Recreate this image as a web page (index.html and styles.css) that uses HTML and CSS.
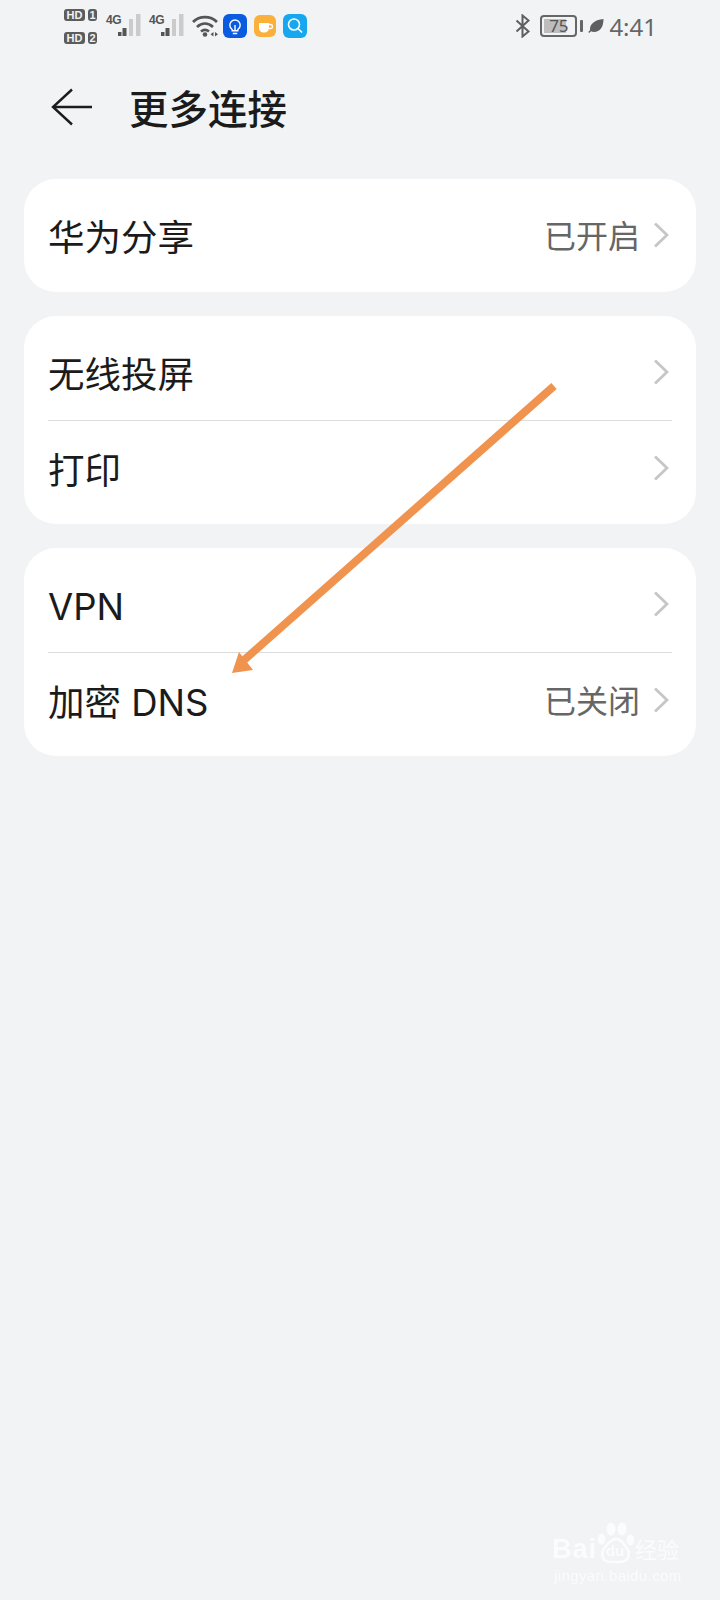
FILE: index.html
```html
<!DOCTYPE html>
<html lang="zh-CN">
<head>
    <meta charset="UTF-8">
    <meta name="viewport" content="width=device-width, initial-scale=1.0">
    <title>更多连接</title>
    <link rel="stylesheet" href="styles.css">
</head>
<body>
    <div class="status-bar">
        <div class="status-left">
            <div class="sims">
                <div class="sim"><span class="hd">HD</span><span class="num">1</span></div>
                <div class="sim"><span class="hd">HD</span><span class="num">2</span></div>
            </div>
            <div class="nets">
                <div class="net">
                    <span class="net-label">4G</span>
                    <svg width="24" height="22" viewBox="0 0 24 22">
                        <rect x="0" y="18" width="3.500" height="4" fill="#555"/>
                        <rect x="4.500" y="14" width="4" height="8" fill="#555"/>
                        <rect x="11" y="5" width="4" height="17" fill="#cbcbcb"/>
                        <rect x="18" y="0" width="4.500" height="22" fill="#cbcbcb"/>
                    </svg>
                </div>
                <div class="net">
                    <span class="net-label">4G</span>
                    <svg width="24" height="22" viewBox="0 0 24 22">
                        <rect x="0" y="18" width="3.500" height="4" fill="#555"/>
                        <rect x="4.500" y="14" width="4" height="8" fill="#555"/>
                        <rect x="11" y="5" width="4" height="17" fill="#cbcbcb"/>
                        <rect x="18" y="0" width="4.500" height="22" fill="#cbcbcb"/>
                    </svg>
                </div>
            </div>
            <svg class="wifi" width="28" height="24" viewBox="0 0 28 24" fill="none" stroke="#555" stroke-width="2.800">
                <path d="M1 8C7.500 1.500 18.500 1.500 25 8"/>
                <path d="M5 13C10 8.500 16 8.500 21 13"/>
                <path d="M9 17.500C11.500 15.500 14.500 15.500 17 17.500"/>
                <circle cx="13" cy="20.500" r="2.300" fill="#555" stroke="none"/>
                <path d="M21.500 18v4.500l-3-2.200zM23 18v4.500l3-2.200z" fill="#555" stroke="none"/>
            </svg>
            <div class="apps">
                <svg width="24" height="24" viewBox="0 0 24 24">
                    <rect width="24" height="24" rx="6" fill="#0b5be0"/>
                    <path d="M9.200 15.500C7.600 14.400 6.800 12.800 6.800 11.200a5.200 5.200 0 0 1 10.400 0c0 1.600-.8 3.200-2.400 4.300v1.300H9.200z" fill="none" stroke="#fff" stroke-width="1.400"/>
                    <path d="M9.800 19.500h4.400M12 11v5" stroke="#fff" stroke-width="1.400" fill="none"/>
                </svg>
                <svg width="24" height="24" viewBox="0 0 24 24">
                    <rect x="1" y="1" width="22" height="22" rx="6" fill="#fbb03b"/>
                    <path d="M6 9h10v5a4.500 4.500 0 0 1-4.500 4.500h-1A4.500 4.500 0 0 1 6 14z" fill="#fff"/>
                    <path d="M16 10.500h1.500a1.800 1.800 0 0 1 0 4H16" fill="none" stroke="#fff" stroke-width="1.300"/>
                </svg>
                <svg width="24" height="24" viewBox="0 0 24 24">
                    <rect width="24" height="24" rx="6" fill="#17a7ef"/>
                    <circle cx="11" cy="10.500" r="5.500" fill="none" stroke="#fff" stroke-width="1.600"/>
                    <path d="M15 14.500l4 4" stroke="#fff" stroke-width="1.600"/>
                </svg>
            </div>
        </div>
        <div class="status-right">
            <svg width="16" height="24" viewBox="0 0 16 24" fill="none" stroke="#5f5f5f" stroke-width="2">
                <path d="M1.500 6.500l12 11-6 5V1.500l6 5-12 11"/>
            </svg>
            <div class="battery-wrap">
                <div class="battery"><span class="battery-fill"></span><span class="battery-num">75</span></div>
                <span class="battery-tip"></span>
            </div>
            <svg class="leaf" width="16" height="16" viewBox="0 0 16 16">
                <path d="M15.500 1C15.500 9 12 14 6 14c-1.200 0-2.300-.3-3-.8L1.200 15 .3 14l1.800-1.900C1.300 7 6 1.800 15.500 1z" fill="#5f5f5f"/>
            </svg>
            <span class="clock">4:41</span>
        </div>
    </div>

    <div class="title-bar">
        <svg class="back" width="42" height="38" viewBox="0 0 42 38" fill="none" stroke="#1c1c1c" stroke-width="2.400">
            <path d="M22 1.500L3 19 22 36.500"/>
            <path d="M3 19H42"/>
        </svg>
        <h1 class="page-title">更多连接</h1>
    </div>

    <div class="card">
        <div class="row row-single">
            <span class="row-label">华为分享</span>
            <span class="row-value">已开启</span>
            <svg class="chevron" width="16" height="26" viewBox="0 0 16 26" fill="none" stroke="#c6c6c6" stroke-width="2.800"><path d="M2 1.500L14 13 2 24.500"/></svg>
        </div>
    </div>

    <div class="card">
        <div class="row row-first">
            <span class="row-label">无线投屏</span>
            <svg class="chevron" width="16" height="26" viewBox="0 0 16 26" fill="none" stroke="#c6c6c6" stroke-width="2.800"><path d="M2 1.500L14 13 2 24.500"/></svg>
        </div>
        <div class="row row-line">
            <span class="row-label">打印</span>
            <svg class="chevron" width="16" height="26" viewBox="0 0 16 26" fill="none" stroke="#c6c6c6" stroke-width="2.800"><path d="M2 1.500L14 13 2 24.500"/></svg>
        </div>
    </div>

    <div class="card">
        <div class="row row-first">
            <span class="row-label">VPN</span>
            <svg class="chevron" width="16" height="26" viewBox="0 0 16 26" fill="none" stroke="#c6c6c6" stroke-width="2.800"><path d="M2 1.500L14 13 2 24.500"/></svg>
        </div>
        <div class="row row-line">
            <span class="row-label">加密 DNS</span>
            <span class="row-value">已关闭</span>
            <svg class="chevron" width="16" height="26" viewBox="0 0 16 26" fill="none" stroke="#c6c6c6" stroke-width="2.800"><path d="M2 1.500L14 13 2 24.500"/></svg>
        </div>
    </div>

    <!-- annotation drawn over the screenshot -->
    <svg class="arrow" width="720" height="800" viewBox="0 0 720 800">
        <path d="M554 386L243 661" stroke="#f0934e" stroke-width="8" fill="none"/>
        <path d="M232 673L239 652 253 670z" fill="#f0934e"/>
    </svg>

    <div class="watermark">
        <div class="wm-top">
            <span class="wm-brand">Bai</span>
            <svg class="wm-paw" width="38" height="42" viewBox="0 0 38 42">
                <ellipse cx="14" cy="7" rx="4.500" ry="6.500" fill="#fff"/>
                <ellipse cx="25" cy="7" rx="4.500" ry="6.500" fill="#fff"/>
                <ellipse cx="4.500" cy="17" rx="3.800" ry="5.500" fill="#fff"/>
                <ellipse cx="33.500" cy="18" rx="3.800" ry="5.500" fill="#fff"/>
                <path d="M19 17c5 0 7 4 10 8 5 6 3 15-6 15H13C5 40 3 31 8 25c4-4 6-8 11-8z" fill="none" stroke="#fff" stroke-width="2.600"/>
            </svg>
            <span class="wm-du">du</span>
            <span class="wm-cn">经验</span>
        </div>
        <div class="wm-url">jingyan.baidu.com</div>
    </div>
</body>
</html>
```

FILE: styles.css
```css
body {
    margin: 0;
    width: 720px;
    height: 1600px;
    position: relative;
    overflow: hidden;
    background-color: #f1f3f5;
    font-family: Inter, "Noto Sans CJK SC", "Noto Sans", sans-serif;
    color: #1b1b1b;
}
.status-bar {
    height: 50px;
    padding: 8px 63px 0 64px;
    box-sizing: border-box;
    display: flex;
    justify-content: space-between;
    color: #5f5f5f;
}
.status-left {
    display: flex;
    align-items: flex-start;
}
.sims {
    display: flex;
    flex-direction: column;
    gap: 11px;
    margin-top: 1px;
}
.sim {
    display: flex;
    gap: 3px;
    height: 12px;
}
.hd,
.num {
    background-color: #5c5c5c;
    color: #f1f3f5;
    font-family: "Liberation Sans", sans-serif;
    font-size: 11px;
    font-weight: bold;
    line-height: 12px;
    text-align: center;
    border-radius: 3px;
}
.hd {
    width: 21px;
}
.num {
    width: 9px;
}
.nets {
    display: flex;
    margin-left: 9px;
    margin-top: 6px;
}
.net {
    display: flex;
    width: 43px;
}
.net-label {
    width: 12px;
    font-family: "Liberation Sans", sans-serif;
    font-size: 12px;
    font-weight: bold;
    line-height: 12px;
    letter-spacing: -0.5px;
    color: #555;
}
.net svg {
    flex: none;
}
.wifi {
    margin-top: 6px;
}
.apps {
    display: flex;
    gap: 6px;
    margin-left: 3px;
    margin-top: 6px;
}
.status-right {
    display: flex;
    align-items: center;
    height: 36px;
}
.battery-wrap {
    display: flex;
    align-items: center;
    margin-left: 9px;
    gap: 3px;
}
.battery {
    width: 37px;
    height: 22px;
    box-sizing: border-box;
    border: 2px solid #666;
    border-radius: 4px;
    position: relative;
}
.battery-fill {
    position: absolute;
    left: 2px;
    top: 2px;
    bottom: 2px;
    width: 22px;
    background-color: #bdbdbd;
}
.battery-num {
    position: absolute;
    left: 0;
    right: 0;
    top: 0;
    text-align: center;
    font-size: 17px;
    line-height: 18px;
    font-family: "Noto Sans", sans-serif;
    color: #555;
}
.battery-tip {
    width: 3px;
    height: 12px;
    background-color: #666;
    border-radius: 1px;
}
.leaf {
    margin-left: 5px;
}
.clock {
    margin-left: 5px;
    margin-top: 2px;
    font-family: "Noto Sans", sans-serif;
    font-size: 24px;
    line-height: 36px;
    color: #666;
}
.title-bar {
    height: 129px;
    padding-left: 50px;
    box-sizing: border-box;
    display: flex;
    align-items: flex-start;
}
.back {
    flex: none;
    margin-top: 38px;
}
.page-title {
    margin: 0 0 0 37px;
    padding-top: 32px;
    font-size: 39.500px;
    line-height: 56px;
    font-weight: 500;
}
.card {
    margin: 0 24px 24px;
    background-color: #fff;
    border-radius: 32px;
    padding: 0 24px;
}
.row {
    height: 104px;
    display: flex;
    align-items: center;
}
.row-single {
    height: 113px;
    padding-top: 3px;
    box-sizing: border-box;
}
.row-first {
    padding-top: 12px;
    box-sizing: border-box;
}
.row-line {
    padding-bottom: 5px;
    border-top: 1px solid #dcdcdc;
    box-sizing: border-box;
}
.row-label {
    flex: 1;
    padding-top: 2px;
    font-size: 36.500px;
    line-height: 50px;
}
.row-value {
    font-size: 32px;
    line-height: 44px;
    color: #666;
    margin-right: 13px;
}
.chevron {
    flex: none;
    margin-right: 3px;
    margin-bottom: 4px;
}
.arrow {
    position: absolute;
    left: 0;
    top: 0;
}
.watermark {
    position: absolute;
    left: 552px;
    top: 1520px;
    color: #fff;
    opacity: 0.8;
}
.wm-top {
    display: flex;
    align-items: flex-end;
    height: 44px;
    position: relative;
}
.wm-brand {
    font-family: "Liberation Sans", sans-serif;
    font-size: 27px;
    line-height: 30px;
    font-weight: bold;
    letter-spacing: 1px;
}
.wm-du {
    position: absolute;
    left: 47px;
    top: 22px;
    width: 32px;
    text-align: center;
    font-family: "Liberation Sans", sans-serif;
    font-size: 15px;
    line-height: 18px;
    font-weight: bold;
}
.wm-cn {
    font-size: 22px;
    line-height: 28px;
}
.wm-url {
    font-family: "Liberation Sans", sans-serif;
    font-size: 15px;
    line-height: 18px;
    letter-spacing: 0.4px;
    margin-top: 3px;
    margin-left: 2px;
}
```
